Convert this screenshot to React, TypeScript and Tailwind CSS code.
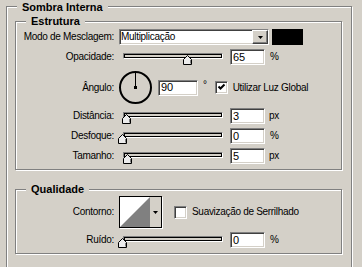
import React from 'react';

const sunken =
  'border border-t-[#808080] border-l-[#808080] border-b-white border-r-white shadow-[inset_1px_1px_0_#404040,inset_-1px_-1px_0_#d4d0c8]';
const raised =
  'border border-t-white border-l-white border-b-[#404040] border-r-[#404040] shadow-[inset_-1px_-1px_0_#808080]';

type GroupProps = { title: string; titleTop: string; className: string; children: React.ReactNode };

const Group: React.FC<GroupProps> = ({ title, titleTop, className, children }) => (
  <div className={`relative border border-[#808080] shadow-[inset_1px_1px_0_#fff,1px_1px_0_#fff] ${className}`}>
    <span
      className={`absolute left-[10px] ${titleTop} bg-[#d4d0c8] px-[5px] text-[11px] leading-[14px] font-bold tracking-normal`}
    >
      {title}
    </span>
    {children}
  </div>
);

const Row: React.FC<{ label: string; className: string; children: React.ReactNode }> = ({ label, className, children }) => (
  <div className={`flex items-center ${className}`}>
    <div className="w-[98px] shrink-0 text-right">{label}</div>
    <div className="ml-[5px] flex h-full items-center">{children}</div>
  </div>
);

const Thumb: React.FC<{ left: string }> = ({ left }) => (
  <svg className={`absolute top-[6px] ${left}`} width="9" height="10" viewBox="0 0 9 10">
    <polygon points="0.5,4.5 4.5,0.5 8.5,4.5 8.5,9.5 0.5,9.5" fill="#ececec" stroke="#000" />
    <line x1="7.5" y1="5" x2="7.5" y2="8.5" stroke="#808080" />
  </svg>
);

const Slider: React.FC<{ left: string }> = ({ left }) => (
  <div className="relative h-[16px] w-[111px] shrink-0">
    <div className="absolute left-[4px] top-[4px] h-[6px] w-[100px] border border-t-[#808080] border-l-[#808080] border-b-white border-r-white bg-[#d4d0c8] shadow-[inset_0_0_0_1px_#000]" />
    <Thumb left={left} />
  </div>
);

const Field: React.FC<{ value: string; w?: string }> = ({ value, w = 'w-[35px]' }) => (
  <div className={`flex h-[16px] ${w} shrink-0 items-center bg-white pl-[2px] text-[11px] tracking-normal ${sunken}`}>
    {value}
  </div>
);

const Check: React.FC<{ checked?: boolean }> = ({ checked }) => (
  <div className={`relative h-[13px] w-[13px] shrink-0 bg-white ${sunken}`}>
    {checked && (
      <svg className="absolute left-[1px] top-[1px]" width="9" height="9" viewBox="0 0 9 9">
        <polyline points="1.5,3.5 3.5,5.5 7.5,1.5" fill="none" stroke="#000" strokeWidth="2" />
      </svg>
    )}
  </div>
);

const DownArrow: React.FC = () => (
  <svg width="5" height="3" viewBox="0 0 5 3">
    <polygon points="0,0 5,0 2.5,3" fill="#000" />
  </svg>
);

const Dial: React.FC = () => (
  <svg width="33" height="33" viewBox="0 0 33 33" className="shrink-0">
    <circle cx="16.5" cy="16.5" r="15.5" fill="none" stroke="#000" strokeWidth="2" />
    <line x1="16.5" y1="16.5" x2="16.5" y2="1.5" stroke="#000" />
    <rect x="15" y="15" width="3" height="3" fill="#000" />
  </svg>
);

const ContourPicker: React.FC = () => (
  <div className="flex h-[32px] w-[43px] shrink-0 border border-black shadow-[1px_1px_0_#fff]">
    <svg width="30" height="30" viewBox="0 0 30 30" className="shrink-0">
      <rect width="30" height="30" fill="#fff" />
      <polygon points="0,30 30,0 30,30" fill="#808080" />
    </svg>
    <div className="flex flex-1 items-center justify-center bg-[#d4d0c8]">
      <DownArrow />
    </div>
  </div>
);

export default function App() {
  return (
    <div className="h-[267px] w-[362px] overflow-hidden bg-[#d4d0c8] pl-[6px] pt-[6px] font-['Liberation_Sans',Arial,sans-serif] text-[10px] leading-none tracking-[-0.3px] text-black">
      <Group title="Sombra Interna" titleTop="top-[-7px]" className="h-[300px] w-[346px] pl-[8px] pt-[14px]">
        <Group title="Estrutura" titleTop="top-[-8px]" className="flex h-[149px] w-[327px] flex-col">
          <Row label="Modo de Mesclagem:" className="mt-[7px] h-[16px]">
            <div className={`flex h-[16px] w-[150px] items-center bg-white ${sunken}`}>
              <span className="flex-1 pl-[1px]">Multiplicação</span>
              <div className={`flex h-[14px] w-[16px] items-center justify-center bg-[#d4d0c8] ${raised}`}>
                <DownArrow />
              </div>
            </div>
            <div className="ml-[3px] h-[16px] w-[31px] bg-black" />
          </Row>

          <Row label="Opacidade:" className="mt-[4px] h-[16px]">
            <Slider left="left-[64px]" />
            <Field value="65" />
            <span className="ml-[5px]">%</span>
          </Row>

          <Row label="Ângulo:" className="mt-[6px] h-[33px]">
            <Dial />
            <div className="ml-[6px]">
              <Field value="90" w="w-[40px]" />
            </div>
            <span className="ml-[5px] self-start pt-[9px]">°</span>
            <div className="ml-[8px]">
              <Check checked />
            </div>
            <span className="ml-[5px]">Utilizar Luz Global</span>
          </Row>

          <Row label="Distância:" className="mt-[4px] h-[16px]">
            <Slider left="left-[3px]" />
            <Field value="3" />
            <span className="ml-[4px]">px</span>
          </Row>

          <Row label="Desfoque:" className="mt-[4px] h-[16px]">
            <Slider left="left-[-1px]" />
            <Field value="0" />
            <span className="ml-[5px]">%</span>
          </Row>

          <Row label="Tamanho:" className="mt-[4px] h-[16px]">
            <Slider left="left-[4px]" />
            <Field value="5" />
            <span className="ml-[4px]">px</span>
          </Row>
        </Group>

        <Group title="Qualidade" titleTop="top-[-8px]" className="mt-[19px] flex h-[65px] w-[327px] flex-col">
          <Row label="Contorno:" className="mt-[6px] h-[32px]">
            <ContourPicker />
            <div className="ml-[12px]">
              <Check />
            </div>
            <span className="ml-[5px]">Suavização de Serrilhado</span>
          </Row>

          <Row label="Ruído:" className="mt-[4px] h-[16px]">
            <Slider left="left-[-1px]" />
            <Field value="0" />
            <span className="ml-[5px]">%</span>
          </Row>
        </Group>
      </Group>
    </div>
  );
}
